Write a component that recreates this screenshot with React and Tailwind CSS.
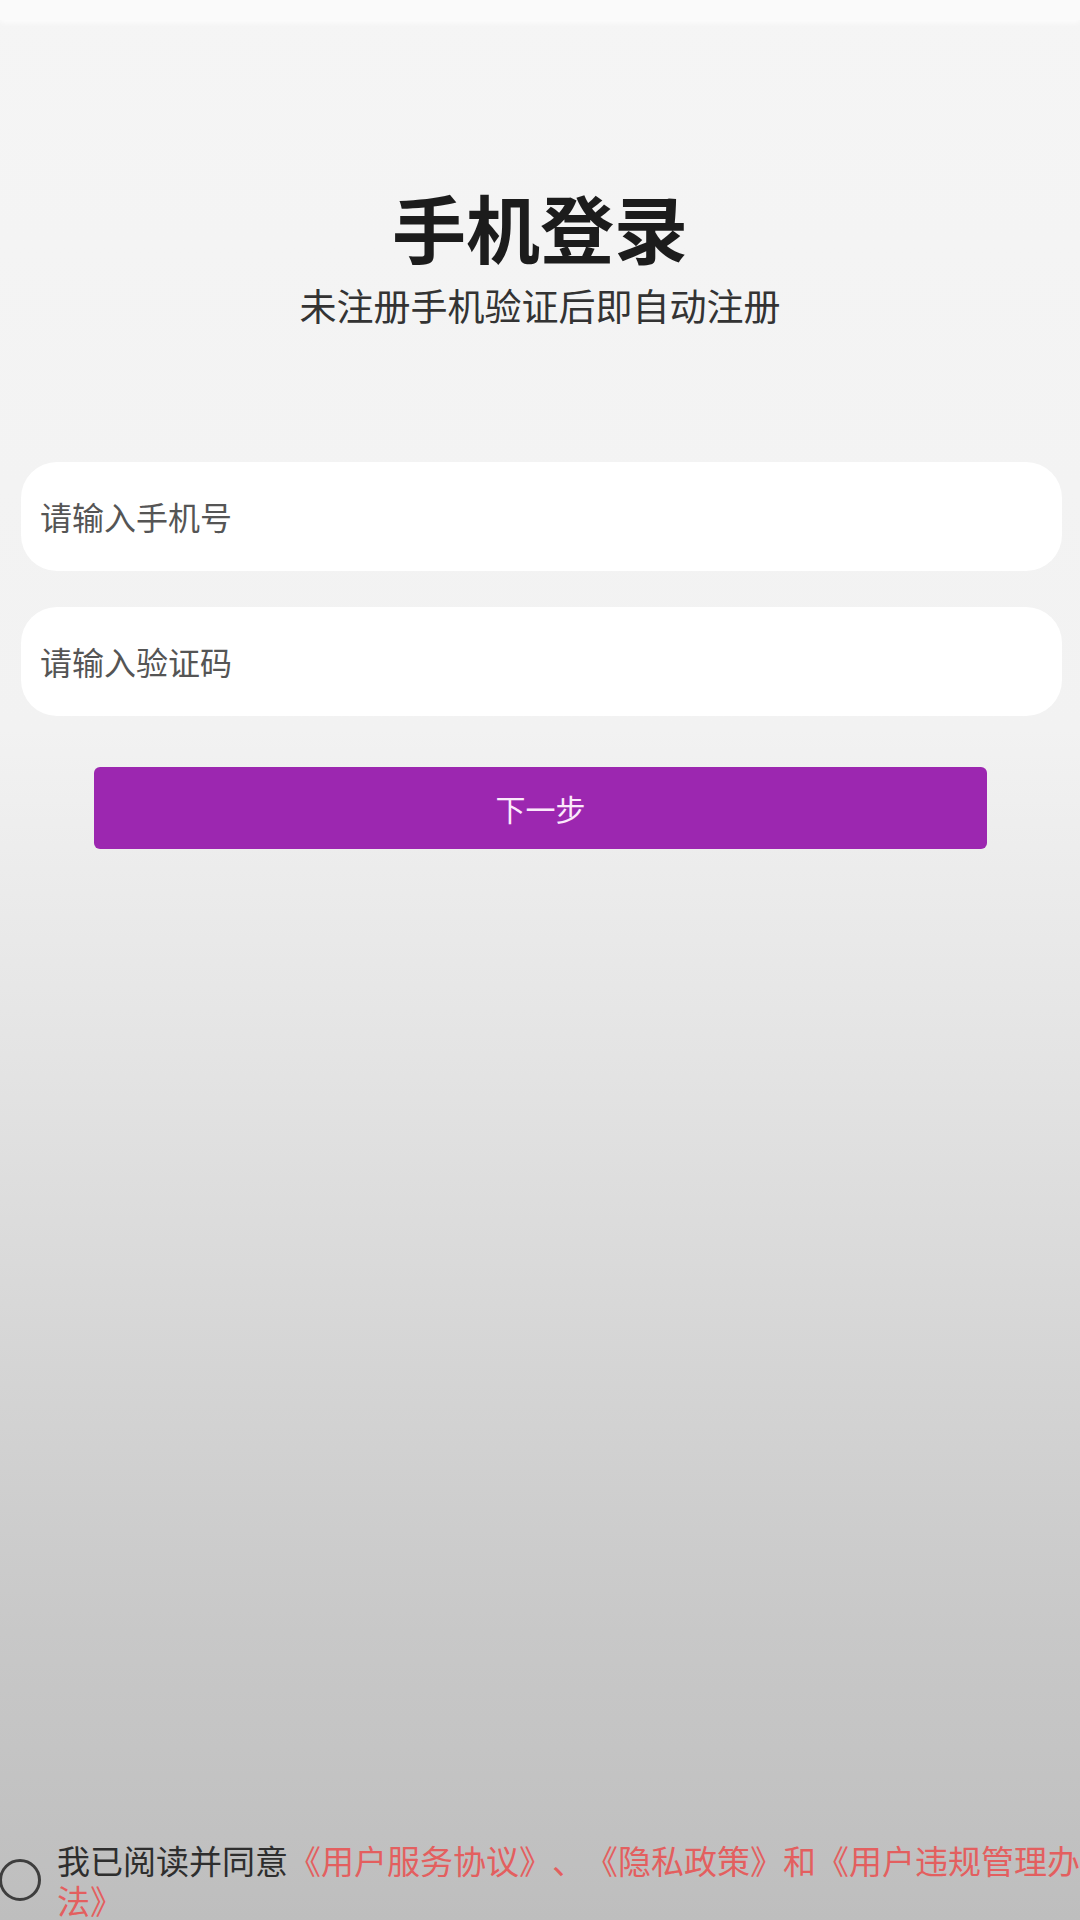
export default function App() {
  const font = { fontFamily: '"Noto Sans CJK SC", "Noto Sans", sans-serif' };
  return (
    <div
      style={font}
      className="w-[1080px] h-[1920px] overflow-hidden flex flex-col bg-[linear-gradient(to_bottom,#f5f5f5_0%,#f2f2f2_38%,#e4e4e4_55%,#d6d6d6_70%,#c8c8c8_85%,#bebebe_100%)]"
    >
      <div className="h-[20px] w-full bg-[#fafafa] shadow-[0_2px_6px_rgba(255,255,255,0.9)]" />

      <h1 className="mt-[166px] text-center text-[74px] leading-[80px] font-semibold text-[#1c1c1c]">
        手机登录
      </h1>
      <p className="mt-[17px] text-center text-[37px] leading-[44px] text-[#333333]">
        未注册手机验证后即自动注册
      </p>

      <div className="mt-[135px] ml-[21px] mr-[18px] h-[112px] rounded-[36px] bg-white flex items-center pl-[19px]">
        <span className="text-[32px] leading-none text-[#555555]">请输入手机号</span>
      </div>
      <div className="mt-[36px] ml-[21px] mr-[18px] h-[112px] rounded-[36px] bg-white flex items-center pl-[19px]">
        <span className="text-[32px] leading-none text-[#555555]">请输入验证码</span>
      </div>

      <button className="mt-[51px] ml-[94px] mr-[93px] h-[84px] rounded-[6px] bg-[#9c27b0] flex items-center justify-center">
        <span className="text-[30px] leading-none text-[#fbe9fb]">下一步</span>
      </button>

      <div className="mt-[991px] flex items-center shrink-0">
        <div className="ml-[-1px] w-[42px] h-[42px] rounded-full border-[3px] border-[#3e3e3e] shrink-0" />
        <div className="ml-[16px] text-[33px] leading-[40px] whitespace-nowrap [text-spacing-trim:space-all]">
          <div>
            <span className="text-[#2e2e2e]">我已阅读并同意</span>
            <span className="text-[#e35f5f]">《用户服务协议》、《隐私政策》和《用户违规管理办</span>
          </div>
          <div className="text-[#e35f5f]">法》</div>
        </div>
      </div>
    </div>
  );
}
